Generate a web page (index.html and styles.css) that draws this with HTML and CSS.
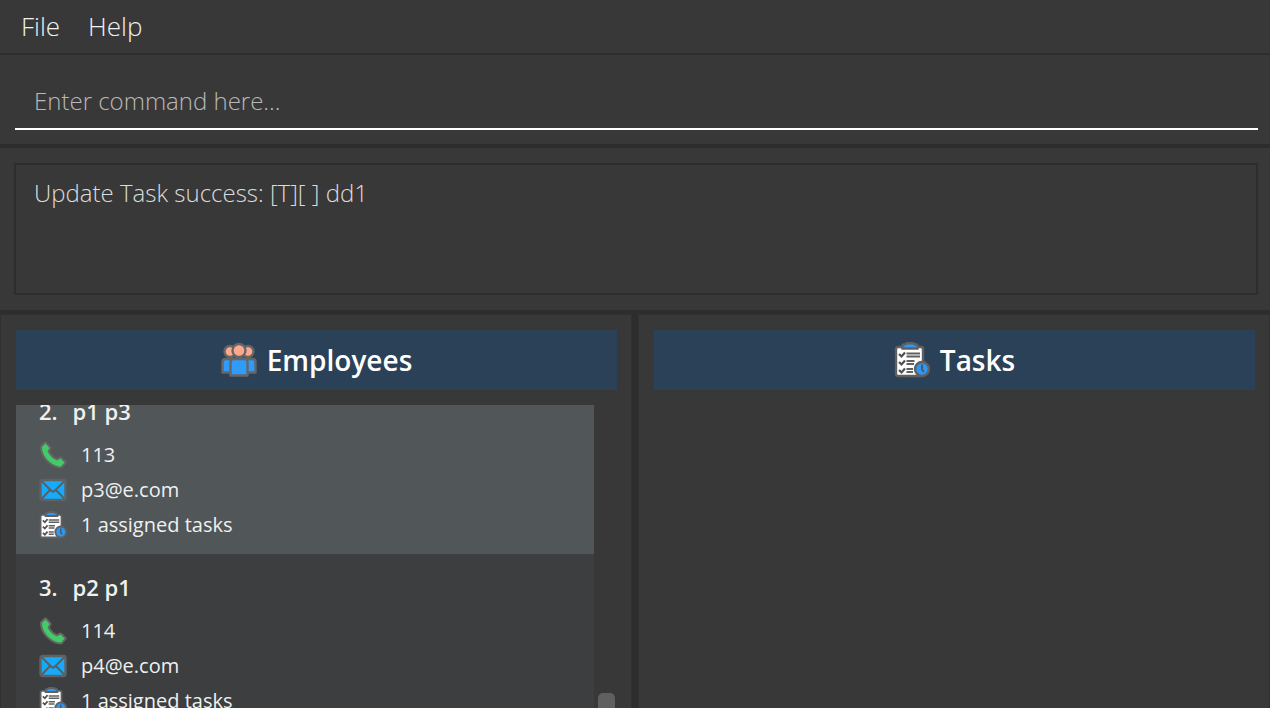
FILE: index.html
```
<!DOCTYPE html>
<html lang="en">
<head>
<meta charset="utf-8">
<title>Employees and Tasks</title>
<link rel="stylesheet" href="styles.css">
</head>
<body>
<svg class="sprite" aria-hidden="true">
  <symbol id="phone" viewBox="0 0 28 28">
    <path d="M3 6 6.500 2.500 10.500 7 8.500 10.500C11 15 14 18 18 19.500L21.500 17.500 25.500 21.500 22 25.500C13 25.500 2.500 15 3 6Z" fill="#42cc68" stroke="#666" stroke-width="4" stroke-linejoin="round" paint-order="stroke"/>
  </symbol>
  <symbol id="mail" viewBox="0 0 28 28">
    <rect x="1.500" y="4" width="25" height="20" rx="2" fill="#14abfc" stroke="#5f6263" stroke-width="2.400"/>
    <path d="M2.500 5 11.500 14Q14 17 16.500 14L25.500 5M2.500 23 11 14M25.500 23 17 14" fill="none" stroke="#5a5f63" stroke-width="2"/>
  </symbol>
  <symbol id="clipboard" viewBox="0 0 36 36">
    <rect x="2" y="5" width="27" height="29" rx="2" fill="#fff" stroke="#606060" stroke-width="2.400"/>
    <path d="M8.500 6.500V3.500Q8.500 2.500 9.500 2.500H11Q12 1.300 13.500 1.300H18.500Q20 1.300 21 2.500H22.500Q23.500 2.500 23.500 3.500V6.500Z" fill="#2f98f4" stroke="#606060" stroke-width="2.400"/>
    <path d="M5 12 7.500 14.500 11 10.500M5 20 7.500 22.500 11 18.500M5 28 7.500 30.500 11 26.500" fill="none" stroke="#505050" stroke-width="2.200"/>
    <path d="M12.500 11.500H26M12.500 14.500H26M12.500 19H20.500M12.500 22H20M12.500 27H19M12.500 30H19" stroke="#606060" stroke-width="1.900"/>
    <circle cx="28" cy="27" r="7" fill="#2f98f4" stroke="#606060" stroke-width="2.400"/>
    <path d="M28 22.500V27.500L30 30" fill="none" stroke="#505860" stroke-width="2"/>
  </symbol>
  <symbol id="people" viewBox="0 0 36 36">
    <g fill="#ffa890" stroke="#666" stroke-width="2.400" stroke-linejoin="round">
      <circle cx="9" cy="9.500" r="5.500"/>
      <circle cx="27" cy="9.500" r="5.500"/>
      <path d="M1.500 20Q1.500 17 4.500 17H31.500Q34.500 17 34.500 20V30.500H1.500Z" fill="#2f9bfb"/>
      <circle cx="18" cy="8.500" r="6.500"/>
      <path d="M9.500 20Q9.500 17 12.500 17H23.500Q26.500 17 26.500 20V33.500H9.500Z" fill="#2f9bfb"/>
    </g>
  </symbol>
</svg>
<div class="app">
  <nav class="menubar">
    <button class="menu" type="button">File</button>
    <button class="menu" type="button">Help</button>
  </nav>
  <form class="command">
    <input class="command-input" type="text" aria-label="Command" placeholder="Enter command here...">
  </form>
  <section class="result">
    <output class="result-box">Update Task success: [T][ ] dd1</output>
  </section>
  <main class="panels">
    <section class="panel">
      <h2 class="panel-title"><svg class="title-icon"><use href="#people"/></svg>Employees</h2>
      <div class="list-area">
        <ol class="list">
          <li class="card card-selected">
            <h3 class="name"><span class="index">2.</span>p1 p3</h3>
            <p class="row"><svg class="row-icon"><use href="#phone"/></svg>113</p>
            <p class="row"><svg class="row-icon"><use href="#mail"/></svg>p3@e.com</p>
            <p class="row"><svg class="row-icon"><use href="#clipboard"/></svg>1 assigned tasks</p>
          </li>
          <li class="card">
            <h3 class="name"><span class="index">3.</span>p2 p1</h3>
            <p class="row"><svg class="row-icon"><use href="#phone"/></svg>114</p>
            <p class="row"><svg class="row-icon"><use href="#mail"/></svg>p4@e.com</p>
            <p class="row"><svg class="row-icon"><use href="#clipboard"/></svg>1 assigned tasks</p>
          </li>
        </ol>
        <div class="scrollbar"><div class="thumb"></div></div>
      </div>
    </section>
    <section class="panel">
      <h2 class="panel-title"><svg class="title-icon"><use href="#clipboard"/></svg>Tasks</h2>
    </section>
  </main>
</div>
</body>
</html>
```
FILE: styles.css
```
* {
  box-sizing: border-box;
  margin: 0;
  padding: 0;
}

body {
  background: #383838;
  color: #fff;
  font-family: "Open Sans", "Noto Sans", sans-serif;
}

.sprite {
  display: none;
}

.app {
  display: flex;
  flex-direction: column;
  height: 100vh;
  overflow: hidden;
}

.menubar {
  display: flex;
  gap: 28px;
  padding: 8px 21px;
  border-bottom: 2px solid #2d2d2d;
}

.menu {
  border: 0;
  background: none;
  color: #f0f0f0;
  font: 300 26px/37px "Open Sans", sans-serif;
}

.command {
  display: flex;
  padding: 19px 12px 14px 15px;
  border-bottom: 4px solid #2d2d2d;
}

.command-input {
  flex: 1;
  padding: 5px 19px;
  border: 0;
  border-bottom: 2px solid #fff;
  background: none;
  color: #fff;
  font: 300 24px/44px "Open Sans", sans-serif;
  outline: 0;
}

.command-input::placeholder {
  color: #b8b8b8;
  opacity: 1;
}

.result {
  display: flex;
  padding: 15px 12px 15px 14px;
  border-bottom: 4px solid #2d2d2d;
}

.result-box {
  flex: 1;
  min-height: 132px;
  padding: 10px 18px;
  border: 2px solid #2d2d2d;
  color: #dcdcdc;
  font: 300 24px/36px "Open Sans", sans-serif;
}

.panels {
  display: grid;
  flex: 1;
  grid-template-columns: 1fr 1fr;
  gap: 6px;
  min-height: 0;
  background: #2d2d2d;
}

.panel {
  display: flex;
  flex-direction: column;
  gap: 15px;
  min-height: 0;
  padding: 15px 14px 0 15px;
  border: 1px solid #303030;
  border-bottom: 0;
  background: #383838;
}

.panel-title {
  display: flex;
  align-items: center;
  justify-content: center;
  gap: 10px;
  background: #2b4157;
  font-size: 28px;
  font-weight: 600;
  line-height: 60px;
}

.title-icon {
  width: 36px;
  height: 36px;
}

.list-area {
  display: flex;
  flex: 1;
  gap: 4px;
  min-height: 0;
  overflow: hidden;
}

.list {
  flex: 1;
  margin-top: -27px;
  list-style: none;
}

.card {
  padding: 16px 23px 12px;
  background: #3c3e3f;
}

.card-selected {
  background: #515658;
}

.name {
  display: flex;
  gap: 15px;
  margin-bottom: 9px;
  color: #f0f0f0;
  font-size: 22px;
  font-weight: 600;
  line-height: 34px;
}

.row {
  display: flex;
  align-items: center;
  gap: 14px;
  color: #f0f0f0;
  font-size: 20px;
  font-weight: 400;
  line-height: 35px;
}

.row-icon {
  width: 28px;
  height: 28px;
}

.scrollbar {
  display: flex;
  flex-direction: column;
  justify-content: flex-end;
  width: 19px;
}

.thumb {
  width: 17px;
  height: 15px;
  border-radius: 5px 5px 0 0;
  background: #606060;
}
```
